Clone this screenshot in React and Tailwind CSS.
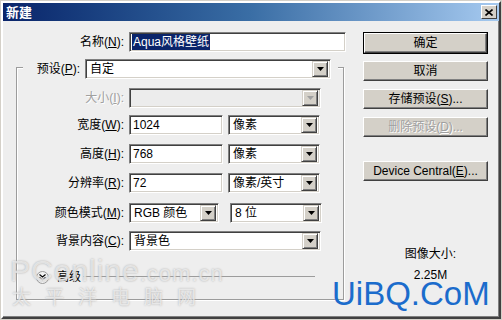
const ui = "font-['Liberation_Sans','Noto_Sans_CJK_SC',sans-serif] text-[12px] leading-none";

const Arrow = ({ disabled }) => (
  <svg width="7" height="4" viewBox="0 0 7 4">
    <path d="M0 0h7L3.5 4z" fill={disabled ? '#a0a0a0' : '#000'} />
  </svg>
);

const Sunken = ({ className = '', children }) => (
  <div className={`border border-t-[#808080] border-l-[#808080] border-b-white border-r-white shadow-[inset_1px_1px_0_#404040,inset_-1px_-1px_0_#d4d0c8] ${className}`}>
    {children}
  </div>
);

const Input = ({ w, value }) => (
  <Sunken className={`${w} h-[20px] bg-white flex items-center px-[3px]`}>
    <span>{value}</span>
  </Sunken>
);

const Combo = ({ w, value, disabled }) => (
  <Sunken className={`${w} h-[20px] ${disabled ? 'bg-[#ececec]' : 'bg-white'} flex items-center pl-[4px] pr-[2px]`}>
    <span className="flex-1">{value}</span>
    <div className="w-[16px] h-[16px] bg-[#d4d0c8] border border-t-[#d4d0c8] border-l-[#d4d0c8] border-b-[#404040] border-r-[#404040] shadow-[inset_1px_1px_0_white,inset_-1px_-1px_0_#808080] flex items-center justify-center">
      <Arrow disabled={disabled} />
    </div>
  </Sunken>
);

const Row = ({ label, mt, lw = 'w-[107px]', disabled, children }) => (
  <div className={`flex items-center gap-[5px] h-[20px] ${mt}`}>
    <span className={`${lw} text-right ${disabled ? 'text-[#a0a0a0] [text-shadow:1px_1px_0_white]' : 'text-black'}`}>{label}</span>
    {children}
  </div>
);

const Btn = ({ children, mt = '', isDefault, disabled }) => {
  const inner = (
    <div className={`h-[20px] w-full bg-[#d4d0c8] border border-t-white border-l-white border-b-[#404040] border-r-[#404040] shadow-[inset_-1px_-1px_0_#808080] flex items-center justify-center ${disabled ? 'text-[#a0a0a0] [text-shadow:1px_1px_0_white]' : 'text-black'}`}>
      {children}
    </div>
  );
  if (isDefault) return <div className={`${mt} w-[125px] border border-black`}>{inner}</div>;
  return <div className={`${mt} w-[125px]`}>{inner}</div>;
};

export default function App() {
  return (
    <div className={`${ui} relative w-[502px] h-[320px] overflow-hidden bg-[#d4d0c8] p-[1px]`}>
      <div className="w-full h-full border-[2px] border-t-white border-l-white border-b-[#404040] border-r-[#404040] shadow-[inset_-1px_-1px_0_#808080] bg-[#eeeeee] flex flex-col">
        {/* title bar */}
        <div className="h-[18px] bg-gradient-to-r from-[#0a246a] via-[#3a6ea5] to-[#a6caf0] flex items-center justify-between pl-[3px] pr-[2px]">
          <span className="text-white font-bold text-[13px]">新建</span>
          <div className="w-[16px] h-[14px] bg-[#d4d0c8] border border-t-white border-l-white border-b-[#404040] border-r-[#404040] flex items-center justify-center">
            <svg width="8" height="7" viewBox="0 0 8 7">
              <path d="M0.5 0.5L7.5 6.5M7.5 0.5L0.5 6.5" stroke="#000" strokeWidth="1.6" />
            </svg>
          </div>
        </div>

        {/* body */}
        <div className="flex flex-1">
          <div className="w-[347px] pt-[11px]">
            <Row label={<>名称(<u>N</u>):</>} lw="w-[121px]">
              <Sunken className="w-[217px] h-[20px] bg-white flex items-center px-[2px]">
                <span className="bg-[#0a246a] text-white px-[1px] py-[2px]">Aqua风格壁纸</span>
              </Sunken>
            </Row>

            <div className="mt-[15px] ml-[13px] w-[328px] h-[233px] border border-[#9c9c9c] shadow-[1px_1px_0_white,inset_1px_1px_0_white]">
              <div className="-mt-[9px] ml-[6px] mr-[5px] bg-[#eeeeee] flex items-center gap-[5px] h-[20px]">
                <span className="w-[57px] text-right">预设(<u>P</u>):</span>
                <Combo w="w-[246px]" value="自定" />
              </div>

              <Row label={<>大小(<u>I</u>):</>} mt="mt-[9px]" disabled>
                <Combo w="w-[192px]" value="" disabled />
              </Row>
              <Row label={<>宽度(<u>W</u>):</>} mt="mt-[7px]">
                <Input w="w-[94px]" value="1024" />
                <Combo w="w-[92px]" value="像素" />
              </Row>
              <Row label={<>高度(<u>H</u>):</>} mt="mt-[9px]">
                <Input w="w-[94px]" value="768" />
                <Combo w="w-[92px]" value="像素" />
              </Row>
              <Row label={<>分辨率(<u>R</u>):</>} mt="mt-[9px]">
                <Input w="w-[94px]" value="72" />
                <Combo w="w-[92px]" value="像素/英寸" />
              </Row>
              <Row label={<>颜色模式(<u>M</u>):</>} mt="mt-[10px]">
                <Combo w="w-[90px]" value="RGB 颜色" />
                <div className="w-[1px]" />
                <Combo w="w-[92px]" value="8 位" />
              </Row>
              <Row label={<>背景内容(<u>C</u>):</>} mt="mt-[8px]">
                <Combo w="w-[192px]" value="背景色" />
              </Row>

              <div className="mt-[19px] ml-[19px] flex items-center h-[14px]">
                <div className="w-[13px] h-[13px] rounded-full bg-[#f4f4f4] border border-[#9a9a9a] flex items-center justify-center">
                  <svg width="7" height="7" viewBox="0 0 7 7">
                    <path d="M0.5 0.5L3.5 3L6.5 0.5M0.5 3.5L3.5 6L6.5 3.5" fill="none" stroke="#000" strokeWidth="1.1" />
                  </svg>
                </div>
                <span className="ml-[8px]">高级</span>
                <div className="ml-[2px] w-[232px] h-[2px] border-t border-[#9c9c9c] border-b-white" />
              </div>
            </div>
          </div>

          <div className="ml-[13px] pt-[11px] flex flex-col">
            <Btn isDefault>确定</Btn>
            <Btn mt="mt-[7px]">取消</Btn>
            <Btn mt="mt-[8px]">存储预设(<u>S</u>)...</Btn>
            <Btn mt="mt-[8px]" disabled>删除预设(<u>D</u>)...</Btn>
            <Btn mt="mt-[24px]">Device Central(<u>E</u>)...</Btn>
            <div className="mt-[67px] pl-[10px] text-center">图像大小:</div>
            <div className="mt-[9px] pl-[10px] text-center">2.25M</div>
          </div>
        </div>
      </div>

      {/* watermarks */}
      <div className="absolute left-[10px] top-[256px] text-[30px] leading-none font-['Liberation_Sans',sans-serif] text-white/60 [text-shadow:0_0_2px_#a8a8a8] tracking-[1px]">
        PConline<span className="text-[22px]">.com.cn</span>
      </div>
      <div className="absolute left-[12px] top-[286px] text-[19px] leading-none font-['Noto_Sans_CJK_SC',sans-serif] text-white/60 [text-shadow:0_0_2px_#a8a8a8] tracking-[14px]">
        太平洋电脑网
      </div>
      <div className="absolute left-[332px] top-[281px] text-[33px] leading-[26px] font-['Liberation_Sans',sans-serif] text-[#1b6ccc]">
        UiBQ.CoM
      </div>
    </div>
  );
}
